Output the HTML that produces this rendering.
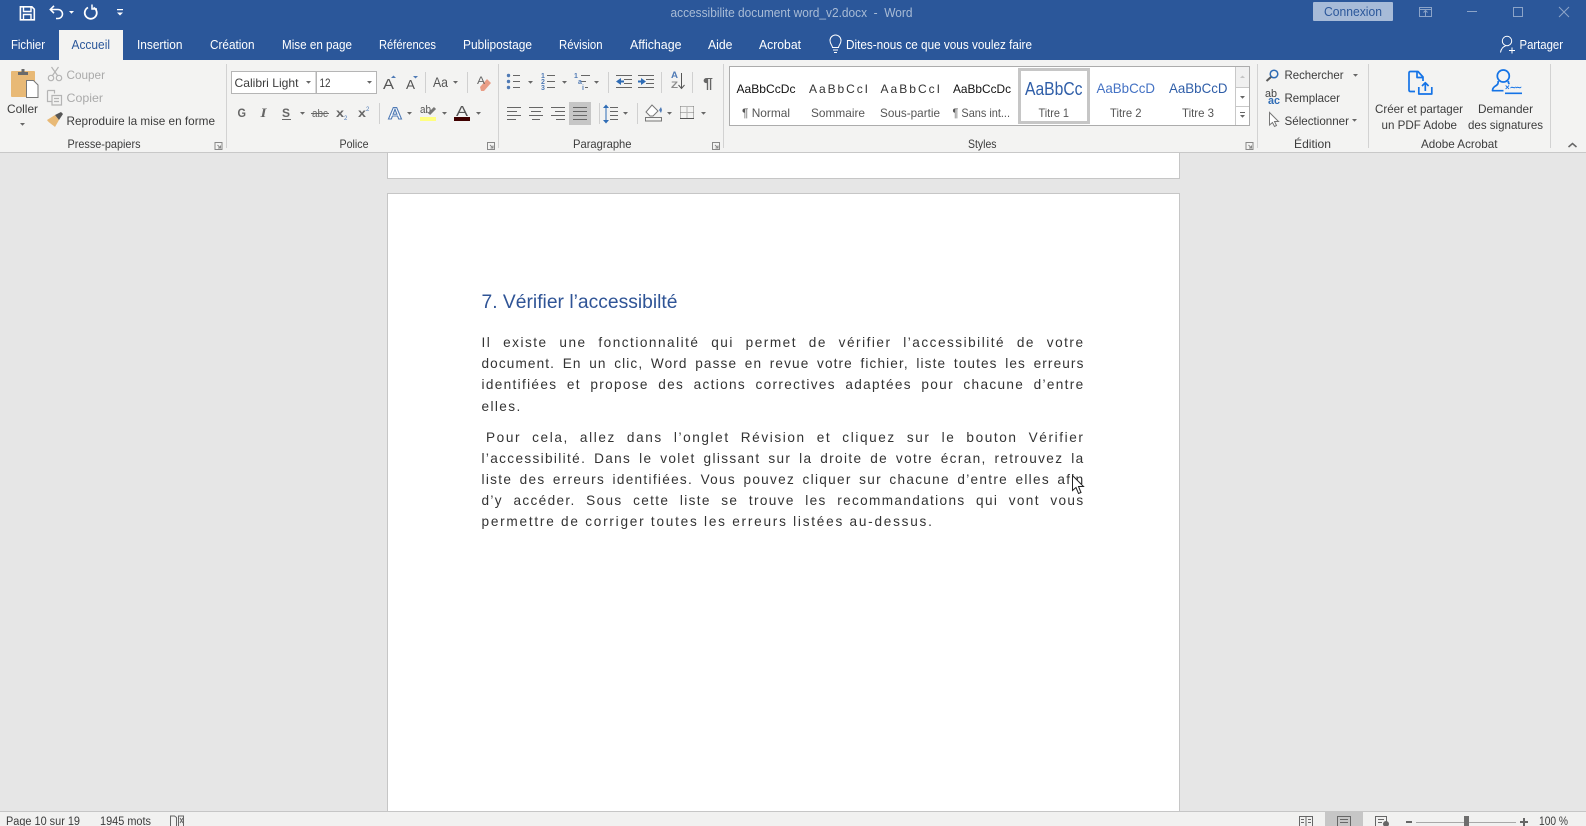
<!DOCTYPE html>
<html lang="fr"><head><meta charset="utf-8"><title>accessibilite document word_v2.docx - Word</title>
<style>
html,body{margin:0;padding:0;background:#e6e6e6;width:1586px;height:826px;overflow:hidden}
svg{position:absolute;left:0;top:0}
svg text{font-family:"Liberation Sans",sans-serif;font-size:12px;fill:#3c3c3c;white-space:pre}
svg text.w{fill:#fff;font-size:12.5px}
svg text.d{fill:#aaa}
.l{position:absolute;left:481.5px;width:603px;font:13.6px/21px "Liberation Sans",sans-serif;color:#333;white-space:nowrap;text-align:justify;text-align-last:justify}
.n{text-align:left;text-align-last:left}
</style></head><body>
<svg width="1586" height="826" viewBox="0 0 1586 826" xmlns="http://www.w3.org/2000/svg">
<defs>
<path id="dd" d="M0 0h5l-2.5 2.8z" fill="#666"/>
<path id="lch" d="M.5.5h7v7h-7zM3 3l3 3M6 3.500V6H3.500" fill="none" stroke="#888"/>
</defs>
<rect width="1586" height="826" fill="#e6e6e6"/>
<!-- title + tabs -->
<rect width="1586" height="60" fill="#2b579a"/>
<rect x="59" y="30" width="64" height="30" fill="#f3f3f2"/>
<!-- ribbon -->
<rect y="60" width="1586" height="92" fill="#f3f3f2"/>
<rect y="152" width="1586" height="1" fill="#c8c8c8"/>
<!-- pages -->
<rect x="387" y="153" width="792" height="25" fill="#fff"/>
<path d="M387.5 153v25.500h792v-25.500" fill="none" stroke="#c6c6c6"/>
<rect x="387.500" y="193.500" width="792" height="640" fill="#fff" stroke="#c6c6c6"/>
<!-- QAT -->
<g fill="none" stroke="#fff" stroke-width="1.600">
<path d="M20.400 6.800h11.500l2.400 2.400v10.600H20.400z"/><path d="M23.500 7v4.500h7.500V7M23.500 19.500v-5h7.500v5" stroke-width="1.400"/>
<path d="M50.500 9.500h7.500a4.500 4.500 0 0 1 0 9h-2"/><path d="M54 5.800l-3.700 3.700 3.700 3.700"/>
<path d="M88 7.500a6 6 0 1 0 5.500 0" stroke-width="1.800"/><path d="M92 4.500v4.500h5" stroke-width="1.500"/>
</g>
<path d="M69 11h5l-2.500 2.800zM117 12.500h6l-3 3zM117 9h6v1.200h-6z" fill="#fff"/>
<text x="670.500" y="17" textLength="242" lengthAdjust="spacingAndGlyphs" style="fill:#a9bcd6;font-size:12.500px">accessibilite document word_v2.docx  -  Word</text>
<rect x="1313" y="2" width="80" height="19" rx="1" fill="#a7bbd8"/>
<text x="1324" y="16" textLength="58" lengthAdjust="spacingAndGlyphs" style="fill:#2b579a;font-size:12.500px">Connexion</text>
<g fill="none" stroke="#8ca4c8">
<path d="M1419.500 7.500h12v9h-12zM1419.500 9.500h12"/><path d="M1425.500 16v-5M1423.500 12.500l2-2 2 2"/>
<path d="M1467 11.500h10M1513.500 7.500h9v9h-9zM1559 7l10 10M1569 7l-10 10"/>
</g>
<!-- tabs -->
<text class="w" x="11" y="49" textLength="34" lengthAdjust="spacingAndGlyphs">Fichier</text>
<text x="71.500" y="49" textLength="38.500" lengthAdjust="spacingAndGlyphs" style="fill:#2b579a;font-size:12.500px">Accueil</text>
<text class="w" x="137" y="49" textLength="45.500" lengthAdjust="spacingAndGlyphs">Insertion</text>
<text class="w" x="210" y="49" textLength="44.500" lengthAdjust="spacingAndGlyphs">Création</text>
<text class="w" x="282" y="49" textLength="70" lengthAdjust="spacingAndGlyphs">Mise en page</text>
<text class="w" x="379" y="49" textLength="57" lengthAdjust="spacingAndGlyphs">Références</text>
<text class="w" x="463" y="49" textLength="69" lengthAdjust="spacingAndGlyphs">Publipostage</text>
<text class="w" x="559" y="49" textLength="43.500" lengthAdjust="spacingAndGlyphs">Révision</text>
<text class="w" x="630" y="49" textLength="51.500" lengthAdjust="spacingAndGlyphs">Affichage</text>
<text class="w" x="708" y="49" textLength="24.500" lengthAdjust="spacingAndGlyphs">Aide</text>
<text class="w" x="759" y="49" textLength="42" lengthAdjust="spacingAndGlyphs">Acrobat</text>
<text class="w" x="846" y="49" textLength="186" lengthAdjust="spacingAndGlyphs">Dites-nous ce que vous voulez faire</text>
<text class="w" x="1519.500" y="49" textLength="43.500" lengthAdjust="spacingAndGlyphs">Partager</text>
<g fill="none" stroke="#fff">
<path d="M832.500 47.500c0-2-2.500-3.500-2.500-7a5.500 5.500 0 0 1 11 0c0 3.500-2.500 5-2.500 7zM833 50h5M834 52.500h3"/>
<circle cx="1507" cy="41" r="4.700"/><path d="M1500.500 52.500c.5-4 3-6 5-6.500M1509 50.500h6M1512 47.500v6"/>
</g>
<!-- separators -->
<path d="M226.500 64v84M498.500 64v84M723.500 64v84M1257.500 64v84M1368.500 64v84M1550.500 64v84" stroke="#d2d2d2"/>
<path d="M425.500 72v21M467.500 72v21M379.500 103v21M608.500 72v21M661.500 72v21M692.500 72v21M599.500 103v21M637.500 103v21" stroke="#d0d0d0"/>
<!-- clipboard -->
<rect x="11" y="71" width="24" height="26" rx="1" fill="#e8b976"/>
<path d="M18 75v-3h3.500v-3h3v3H28v3z" fill="#6b6b6b"/>
<path d="M26.500 80.500h7l4.500 4.500v12.500H26.500z" fill="#fff" stroke="#777"/>
<text x="7" y="113" textLength="31" lengthAdjust="spacingAndGlyphs">Coller</text>
<use href="#dd" x="20" y="123"/>
<g fill="none" stroke="#b4b4b4" stroke-width="1.200">
<circle cx="51" cy="78" r="2.700"/><circle cx="59" cy="78" r="2.700"/><path d="M52.500 75.500l6-8.500M57.500 75.500l-6-8.500"/>
<path d="M47.500 90.500h7v3M47.500 90.500v11h4M52 95.500h9.500v9.500H52zM54 98.500h5M54 101.500h5"/>
</g>
<text class="d" x="66.500" y="79" textLength="38.500" lengthAdjust="spacingAndGlyphs">Couper</text>
<text class="d" x="66.500" y="102" textLength="36.500" lengthAdjust="spacingAndGlyphs">Copier</text>
<path d="M47 120l8-5 4 5-4 7c-2-2-6-4-8-7z" fill="#e8b976"/><path d="M55 115l4 5 4-6-2-2z" fill="#555"/>
<text x="66.500" y="125" textLength="148.500" lengthAdjust="spacingAndGlyphs">Reproduire la mise en forme</text>
<text x="67.500" y="148" textLength="73" lengthAdjust="spacingAndGlyphs">Presse-papiers</text>
<use href="#lch" x="214.500" y="142"/><use href="#lch" x="487" y="142"/><use href="#lch" x="712" y="142"/><use href="#lch" x="1245.500" y="142"/>
<!-- font boxes -->
<rect x="231.500" y="71.500" width="84.500" height="22" fill="#fff" stroke="#b5b5b5"/>
<rect x="316.500" y="71.500" width="60" height="22" fill="#fff" stroke="#b5b5b5"/>
<text x="234.500" y="87" textLength="64" lengthAdjust="spacingAndGlyphs">Calibri Light</text>
<text x="319.500" y="87" textLength="11" lengthAdjust="spacingAndGlyphs">12</text>
<use href="#dd" x="306" y="81"/><use href="#dd" x="367" y="81"/>
<text x="383" y="89" textLength="11" lengthAdjust="spacingAndGlyphs" style="font-size:15px;fill:#555">A</text>
<path d="M391 78l2.500-2.500L396 78z" fill="#4f7ab5"/>
<text x="406" y="89" textLength="9" lengthAdjust="spacingAndGlyphs" style="font-size:13px;fill:#555">A</text>
<path d="M413 76h5l-2.500 2.500z" fill="#4f7ab5"/>
<text x="433" y="87" textLength="15" lengthAdjust="spacingAndGlyphs" style="font-size:14px;fill:#555">Aa</text>
<use href="#dd" x="453" y="81"/>
<path d="M480 87l7-8 4 4-7 8h-3z" fill="#e99d86"/><text x="477" y="84" textLength="8" lengthAdjust="spacingAndGlyphs" style="fill:#666;font-size:11px">A</text>
<text x="237.500" y="117" textLength="8.500" lengthAdjust="spacingAndGlyphs" style="fill:#666;font-weight:bold">G</text>
<text x="260.500" y="117" textLength="6" lengthAdjust="spacingAndGlyphs" style="fill:#666;font-style:italic;font-family:'Liberation Serif',serif;font-size:13px;font-weight:bold">I</text>
<text x="282" y="117" textLength="8" lengthAdjust="spacingAndGlyphs" style="fill:#666;font-weight:bold">S</text>
<path d="M282 119.500h9" stroke="#666"/><use href="#dd" x="300" y="112"/>
<text x="312" y="117" textLength="16" lengthAdjust="spacingAndGlyphs" style="fill:#666;font-size:11px">abc</text><path d="M311 113.500h18" stroke="#666"/>
<text x="336" y="117" textLength="8" lengthAdjust="spacingAndGlyphs" style="fill:#666;font-weight:bold">x</text><text x="344" y="120" style="fill:#4f7ab5;font-size:6px">2</text>
<text x="358" y="117" textLength="8" lengthAdjust="spacingAndGlyphs" style="fill:#666;font-weight:bold">x</text><text x="366" y="111" style="fill:#4f7ab5;font-size:6px">2</text>
<text x="388" y="119" textLength="14" lengthAdjust="spacingAndGlyphs" style="font-size:17px;font-weight:bold;fill:#fff;stroke:#4f7ab5;stroke-width:1">A</text>
<use href="#dd" x="407" y="112"/>
<text x="420" y="113" textLength="11" lengthAdjust="spacingAndGlyphs" style="fill:#555;font-size:11px">ab</text><path d="M429 114l6-6" stroke="#777" stroke-width="3"/><rect x="420" y="117" width="16" height="4" fill="#ffff80"/>
<use href="#dd" x="442" y="112"/>
<text x="456" y="116" textLength="12" lengthAdjust="spacingAndGlyphs" style="font-size:15px;fill:#555">A</text><rect x="454" y="117" width="16" height="4" fill="#3f0000"/>
<use href="#dd" x="476" y="112"/>
<text x="339.500" y="148" textLength="29" lengthAdjust="spacingAndGlyphs">Police</text>
<!-- paragraph -->
<g fill="#4f7ab5"><circle cx="508.500" cy="75.500" r="1.700"/><circle cx="508.500" cy="81.500" r="1.700"/><circle cx="508.500" cy="87.500" r="1.700"/></g>
<path d="M513 75.500h7M513 81.500h7M513 87.500h7M547 75.500h8M547 81.500h8M547 87.500h8M581 75.500h9M581 81.500h5M585 87.500h3" stroke="#666" fill="none"/>
<use href="#dd" x="528" y="81"/><use href="#dd" x="562" y="81"/><use href="#dd" x="594" y="81"/>
<text x="541" y="78" style="fill:#4f7ab5;font-size:7px;font-weight:bold">1</text><text x="541" y="84" style="fill:#4f7ab5;font-size:7px;font-weight:bold">2</text><text x="541" y="90" style="fill:#4f7ab5;font-size:7px;font-weight:bold">3</text><text x="574" y="78" style="fill:#4f7ab5;font-size:7px;font-weight:bold">1</text><text x="578" y="84" style="fill:#4f7ab5;font-size:7px;font-weight:bold">a</text><text x="582" y="90" style="fill:#4f7ab5;font-size:7px;font-weight:bold">i</text>
<path d="M616 75.500h16M624 79.500h8M624 83.500h8M616 87.500h16M638 75.500h16M646 79.500h8M646 83.500h8M638 87.500h16" stroke="#666" fill="none"/>
<path d="M616 81.500l5-3.500v7zM646 81.500l-5-3.500v7z" fill="#2f6cb5"/><path d="M620 81.500h4M638 81.500h4" stroke="#2f6cb5" stroke-width="2"/>
<text x="671" y="78" textLength="7" lengthAdjust="spacingAndGlyphs" style="font-size:9px;fill:#4f7ab5;font-weight:bold">A</text>
<text x="671" y="88" textLength="7" lengthAdjust="spacingAndGlyphs" style="font-size:9px;fill:#8a8a8a;font-weight:bold">Z</text>
<path d="M681.500 73v15M678.500 85l3 3.500 3-3.500" stroke="#555" fill="none"/>
<text x="703" y="88" textLength="10" lengthAdjust="spacingAndGlyphs" style="font-size:15px;fill:#666;font-weight:bold">¶</text>
<rect x="569" y="102" width="22" height="23" fill="#c6c6c6"/>
<g stroke="#666" fill="none">
<path d="M507 107.500h14M507 111.500h10M507 115.500h14M507 119.500h9"/>
<path d="M529 107.500h14M531 111.500h10M529 115.500h14M532 119.500h8"/>
<path d="M551 107.500h14M555 111.500h10M551 115.500h14M556 119.500h9"/>
<path d="M573 107.500h14M573 111.500h14M573 115.500h14M573 119.500h14"/>
<path d="M610 107.500h8M610 111.500h8M610 115.500h8M610 119.500h8"/>
</g>
<path d="M606 105v18" stroke="#2f6cb5"/><path d="M603 108l3-3.500 3 3.500zM603 120l3 3.500 3-3.500z" fill="#2f6cb5"/>
<use href="#dd" x="623" y="112"/>
<path d="M652 105l6 6-5 5h-3l-4-4z" fill="#fff" stroke="#777"/><rect x="645.500" y="117.500" width="16" height="3.500" fill="#f3f3f2" stroke="#777"/><path d="M659 110l2-3 1 3-1 3z" fill="#4f7ab5"/>
<use href="#dd" x="667" y="112"/>
<path d="M680.500 106.500h13M680.500 112.500h13M680.500 106.500v12M693.500 106.500v12M687 106.500v12" stroke="#777" stroke-dasharray="1 1" fill="none"/><path d="M680 118.500h14" stroke="#555"/>
<use href="#dd" x="701" y="112"/>
<text x="573" y="148" textLength="58.500" lengthAdjust="spacingAndGlyphs">Paragraphe</text>
<!-- styles gallery -->
<rect x="729.500" y="66.500" width="520" height="59" fill="#fff" stroke="#acacac"/>
<rect x="1019.500" y="69.500" width="69" height="53" fill="#fff" stroke="#c6c6c6" stroke-width="3"/>
<path d="M1235.500 67v58M1236 87.500h13M1236 106.500h13" stroke="#c8c8c8"/><rect x="1236" y="67" width="13" height="20" fill="#f0f0f0"/>
<path d="M1240 78l2.500-2.500L1245 78z" fill="#c4c4c4"/><use href="#dd" x="1240" y="96"/><path d="M1240 112h5v1h-5z" fill="#666"/><use href="#dd" x="1240" y="115"/>
<text x="736.500" y="93" textLength="59" lengthAdjust="spacingAndGlyphs" style="fill:#111">AaBbCcDc</text>
<text x="809" y="93" textLength="59" style="fill:#333">AaBbCcI</text>
<text x="880.500" y="93" textLength="59.500" style="fill:#333">AaBbCcI</text>
<text x="953" y="93" textLength="58" lengthAdjust="spacingAndGlyphs" style="fill:#111">AaBbCcDc</text>
<text x="1025" y="95" textLength="57.500" lengthAdjust="spacingAndGlyphs" style="font-size:18px;fill:#2f5ea8">AaBbCc</text>
<text x="1096.500" y="93" textLength="58.500" lengthAdjust="spacingAndGlyphs" style="font-size:14px;fill:#4472c4">AaBbCcD</text>
<text x="1169" y="93" textLength="58.500" lengthAdjust="spacingAndGlyphs" style="font-size:14px;fill:#2f5ea8">AaBbCcD</text>
<text x="742" y="117" textLength="48" lengthAdjust="spacingAndGlyphs" style="fill:#555">¶ Normal</text>
<text x="811" y="117" textLength="54" lengthAdjust="spacingAndGlyphs" style="fill:#555">Sommaire</text>
<text x="880" y="117" textLength="60" lengthAdjust="spacingAndGlyphs" style="fill:#555">Sous-partie</text>
<text x="952.500" y="117" textLength="57.500" lengthAdjust="spacingAndGlyphs" style="fill:#555">¶ Sans int...</text>
<text x="1038.500" y="117" textLength="30.500" lengthAdjust="spacingAndGlyphs" style="fill:#555">Titre 1</text>
<text x="1110" y="117" textLength="31.500" lengthAdjust="spacingAndGlyphs" style="fill:#555">Titre 2</text>
<text x="1182" y="117" textLength="32" lengthAdjust="spacingAndGlyphs" style="fill:#555">Titre 3</text>
<text x="968" y="148" textLength="28.500" lengthAdjust="spacingAndGlyphs">Styles</text>
<!-- edition -->
<circle cx="1274" cy="74" r="3.800" fill="none" stroke="#2f6cb5" stroke-width="1.500"/><path d="M1271 77l-4.500 4" stroke="#5a5a5a" stroke-width="2"/>
<text x="1284.500" y="79" textLength="59" lengthAdjust="spacingAndGlyphs">Rechercher</text>
<use href="#dd" x="1353" y="74"/>
<text x="1265" y="97" textLength="12" lengthAdjust="spacingAndGlyphs" style="font-size:11px;fill:#444">ab</text><text x="1268" y="104" textLength="12" lengthAdjust="spacingAndGlyphs" style="font-size:11px;fill:#2f6cb5;font-weight:bold">ac</text>
<text x="1284.500" y="102" textLength="55.500" lengthAdjust="spacingAndGlyphs">Remplacer</text>
<path d="M1269.500 112.500v12.500l3-2.500 2 4 2-1-2-4h4z" fill="#fff" stroke="#777"/>
<text x="1284.500" y="125" textLength="64.500" lengthAdjust="spacingAndGlyphs">Sélectionner</text>
<use href="#dd" x="1352" y="119"/>
<text x="1294" y="148" textLength="37" lengthAdjust="spacingAndGlyphs">Édition</text>
<!-- acrobat -->
<g fill="none" stroke="#1473e6" stroke-width="1.700" stroke-linejoin="round">
<path d="M1415 91.500h-4.500c-1 0-1.500-.5-1.500-1.500v-17c0-1 .5-1.500 1.500-1.500h7.500l5 5.500v4"/><path d="M1417 72v5.500h5.500"/>
<path d="M1418.800 87v7h13v-7M1425.300 91v-8M1422 86l3.300-3.300 3.300 3.300"/>
<circle cx="1503.300" cy="76" r="6"/><path d="M1498 81c.8 2.500-.5 4-3 5.300-1.500 1-2.500 2.300-2.500 4.400h11M1508.500 81c-.5 1.500 0 2.300 1 3"/>
<path d="M1505 93.300h17"/>
</g>
<text x="1505" y="90" textLength="17" lengthAdjust="spacing" style="font-size:8px;fill:#1473e6;font-weight:bold">× ∼∼</text>
<text x="1375" y="113" textLength="88" lengthAdjust="spacingAndGlyphs">Créer et partager</text>
<text x="1381.500" y="129" textLength="75.500" lengthAdjust="spacingAndGlyphs">un PDF Adobe</text>
<text x="1478" y="113" textLength="55" lengthAdjust="spacingAndGlyphs">Demander</text>
<text x="1468" y="129" textLength="75" lengthAdjust="spacingAndGlyphs">des signatures</text>
<text x="1421" y="148" textLength="76.500" lengthAdjust="spacingAndGlyphs">Adobe Acrobat</text>
<path d="M1568.500 147l4-3.500 4 3.500" fill="none" stroke="#666" stroke-width="1.500"/>
<!-- heading -->
<text x="481.500" y="308" textLength="196" lengthAdjust="spacingAndGlyphs" style="font-size:19px;fill:#2f5496">7. Vérifier l’accessibilté</text>
<!-- status -->
<rect y="811" width="1586" height="15" fill="#f1f1f0"/>
<rect y="811" width="1586" height="1" fill="#c6c6c6"/>
<rect x="1325" y="812" width="38" height="14" fill="#c6c6c6"/>
<text x="6" y="825" textLength="74" lengthAdjust="spacingAndGlyphs" style="font-size:11.500px">Page 10 sur 19</text>
<text x="100" y="825" textLength="51" lengthAdjust="spacingAndGlyphs" style="font-size:11.500px">1945 mots</text>
<path d="M170.500 826v-10h4l2 1.500V826M178.500 826v-10h5v10M180 818l3 5M183 818l-3 5" stroke="#666" fill="none"/>
<path d="M1299.500 816.500h13v10h-13zM1306 816v10M1301 819.500h3M1301 822.500h3M1308 819.500h3M1308 822.500h3" fill="#f1f1f0" stroke="#666"/>
<path d="M1337.500 816.500h13v10h-13zM1340 819.500h8M1340 822.500h8" fill="#c6c6c6" stroke="#666"/>
<path d="M1375.500 816.500h11v10h-11zM1378 819.500h6M1378 822.500h4" fill="#f1f1f0" stroke="#666"/><circle cx="1386" cy="824" r="3" fill="#666"/>
<path d="M1406 822h6M1520 822h8M1524 818v8" stroke="#666" stroke-width="2"/>
<path d="M1416 822.500h100" stroke="#a8a8a8"/><rect x="1464" y="816" width="5" height="10" fill="#6e6e6e"/>
<text x="1539" y="825" textLength="29" lengthAdjust="spacingAndGlyphs" style="font-size:11.500px">100 %</text>
</svg>
<div class="l" style="top:332px;letter-spacing:1.5px">Il existe une fonctionnalité qui permet de vérifier l’accessibilité de votre</div>
<div class="l" style="top:353px;letter-spacing:1.12px">document. En un clic, Word passe en revue votre fichier, liste toutes les erreurs</div>
<div class="l" style="top:374px;letter-spacing:1.33px">identifiées et propose des actions correctives adaptées pour chacune d’entre</div>
<div class="l n" style="top:396px;letter-spacing:1.4px">elles.</div>
<div class="l" style="top:427px;left:486px;width:598.500px;letter-spacing:1.6px">Pour cela, allez dans l’onglet Révision et cliquez sur le bouton Vérifier</div>
<div class="l" style="top:448px;letter-spacing:1.35px">l’accessibilité. Dans le volet glissant sur la droite de votre écran, retrouvez la</div>
<div class="l" style="top:469px;letter-spacing:1.3px">liste des erreurs identifiées. Vous pouvez cliquer sur chacune d’entre elles afin</div>
<div class="l" style="top:490px;letter-spacing:1.35px">d’y accéder. Sous cette liste se trouve les recommandations qui vont vous</div>
<div class="l n" style="top:511px;letter-spacing:1.76px">permettre de corriger toutes les erreurs listées au-dessus.</div>
<svg width="1586" height="826" viewBox="0 0 1586 826" style="pointer-events:none"><path d="M1072.500 475.500v15l3.500-3 2.500 6 2.500-1-2.500-6h5z" fill="#fff" stroke="#222"/></svg>
</body></html>
